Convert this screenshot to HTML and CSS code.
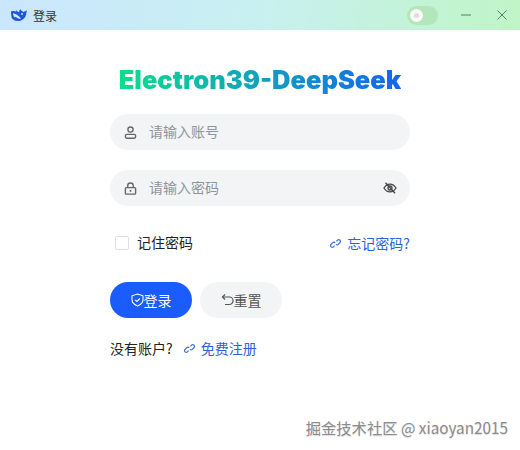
FILE: index.html
```html
<!DOCTYPE html>
<html lang="zh-CN">
  <head>
    <meta charset="UTF-8" />
    <title>登录</title>
    <link rel="stylesheet" href="styles.css">
  </head>
  <body>
    <div class="titlebar">
      <div class="titlebar-left">
        <svg class="logo" width="16" height="13" viewBox="0 0 16 13">
          <path d="M0 2.500C2 1.800 4 2 5.500 2.800 4.800 2 4.500 1.500 5 1c.6 1 1.800 1.800 3 2.300C8.100 2 8.800.8 9.500 0c0 1 .6 1.500 1.500 2 .5.300.8.700 1 1.200.6-.6 1.600-.8 2.400-1 .6-.2 1.100-.5 1.600-1-.1 1.200-.4 2.200-.9 3 .2.300.2.600.1 1-.4 2.200-1.600 4-3.500 5.300-1.500 1-3.300 1.500-5 1.500-2.500 0-4.600-1-6-3C.5 7.800 0 5.200 0 2.500z" fill="#1e56e0"/>
          <path d="M2 4.200c2.400.2 5.600 2 8 5.400-.9.500-2 .3-3-.3C5.500 8.300 4 7.300 3.500 7.800c-.2.500.2 1 .7 1.500-1-.4-2-2.600-2.200-5.100z" fill="#d4ecff"/>
          <circle cx="11" cy="5" r=".9" fill="#d4ecff"/>
        </svg>
        <span class="app-title">登录</span>
      </div>
      <div class="titlebar-right">
        <div class="theme-switch">
          <span class="knob"><span class="knob-dot"></span></span>
        </div>
        <svg class="win-btn" width="10" height="10" viewBox="0 0 10 10"><path d="M0 5h10" stroke="#5d7a68" fill="none"/></svg>
        <svg class="win-btn" width="10" height="10" viewBox="0 0 10 10"><path d="M.5.5l9 9M9.500.5l-9 9" stroke="#5d7a68" fill="none"/></svg>
      </div>
    </div>

    <div class="login-form">
      <h1 class="brand">Electron39-DeepSeek</h1>

      <div class="field">
        <svg class="field-icon" width="13" height="13" viewBox="0 0 14 14" fill="none" stroke="#666" stroke-width="1.500">
          <circle cx="7" cy="3.800" r="2.800"/>
          <rect x="1.500" y="9" width="11" height="4.200" rx="1.500"/>
        </svg>
        <span class="placeholder">请输入账号</span>
      </div>

      <div class="field">
        <svg class="field-icon" width="13" height="13" viewBox="0 0 14 14" fill="none" stroke="#666" stroke-width="1.500">
          <rect x="1.500" y="6" width="11" height="7" rx="1"/>
          <path d="M4 6V4a3 3 0 0 1 6 0v2"/>
          <path d="M7 8.500v2" stroke-width="1.800"/>
        </svg>
        <span class="placeholder">请输入密码</span>
        <svg class="eye-icon" width="14" height="14" viewBox="0 0 14 14" fill="none" stroke="#444" stroke-width="1.300">
          <path d="M1 7c1.500-2.600 3.500-3.900 6-3.900S11.500 4.400 13 7c-1.500 2.600-3.500 3.900-6 3.900S2.500 9.600 1 7z"/>
          <circle cx="7" cy="7" r="2"/>
          <path d="M2.500 1.800l9.500 10.400"/>
        </svg>
      </div>

      <div class="options-row">
        <label class="remember"><span class="checkbox"></span><span class="remember-text">记住密码</span></label>
        <a class="link forgot">
          <svg class="link-icon" width="11" height="11" viewBox="0 0 11 11" fill="none" stroke="#3a6ee0" stroke-width="1.200"><path d="M4.600 7.600l-1.200 1.300a1.700 1.700 0 0 1-2.400-2.400l1.700-1.800a1.700 1.700 0 0 1 2.400 0M6.400 3.400l1.200-1.300a1.700 1.700 0 0 1 2.400 2.400L8.300 6.300a1.700 1.700 0 0 1-2.400 0"/></svg>
          忘记密码?
        </a>
      </div>

      <div class="actions">
        <button class="btn btn-primary">
          <svg width="13" height="14" viewBox="0 0 13 14" fill="none" stroke="#fff" stroke-width="1.100"><path d="M6.500 1L12 2.800v4c0 3-2.500 5-5.500 6.200C3.500 11.800 1 9.800 1 6.800v-4z"/><path d="M4.200 6.800l1.700 1.700 3-3"/></svg>
          登录
        </button>
        <button class="btn btn-plain">
          <svg width="13" height="13" viewBox="0 0 13 13" fill="none" stroke="#555" stroke-width="1.200"><path d="M4 1.500L1.500 4 4 6.500"/><path d="M1.500 4h6.800a3.200 3.200 0 0 1 0 7.500H4"/></svg>
          重置
        </button>
      </div>

      <div class="register-row">
        <span>没有账户?</span>
        <a class="link">
          <svg class="link-icon" width="11" height="11" viewBox="0 0 11 11" fill="none" stroke="#3a6ee0" stroke-width="1.200"><path d="M4.600 7.600l-1.200 1.300a1.700 1.700 0 0 1-2.400-2.400l1.700-1.800a1.700 1.700 0 0 1 2.400 0M6.400 3.400l1.200-1.300a1.700 1.700 0 0 1 2.400 2.400L8.300 6.300a1.700 1.700 0 0 1-2.400 0"/></svg>
          免费注册
        </a>
      </div>
    </div>

    <div class="watermark">掘金技术社区 @ xiaoyan2015</div>
  </body>
</html>
```

FILE: styles.css
```css
* {
  margin: 0;
  padding: 0;
  box-sizing: border-box;
}

body {
  width: 520px;
  height: 450px;
  background: #fff;
  font-family: 'Noto Sans CJK SC', 'Liberation Sans', sans-serif;
  font-size: 14px;
  color: #222;
  position: relative;
  overflow: hidden;
}

.titlebar {
  height: 30px;
  background: linear-gradient(100deg, #cbe6ff 0%, #c8f0f0 50%, #c0f5c6 100%);
  display: flex;
  justify-content: space-between;
  align-items: center;
  padding: 0 13px 0 11px;
}

.titlebar-left {
  display: flex;
  align-items: center;
  gap: 6px;
}

.app-title {
  font-size: 12px;
  color: #333;
}

.titlebar-right {
  display: flex;
  align-items: center;
}

.theme-switch {
  width: 31px;
  height: 19px;
  border-radius: 10px;
  background: #b4e6bc;
  padding: 3px;
  margin-right: 23px;
}

.knob {
  display: flex;
  justify-content: center;
  align-items: center;
  width: 13px;
  height: 13px;
  border-radius: 50%;
  background: #f6fbf4;
}

.knob-dot {
  width: 5px;
  height: 5px;
  border-radius: 50%;
  background: #e8d8dc;
}

.win-btn + .win-btn {
  margin-left: 26px;
}

.login-form {
  width: 300px;
  margin-left: 110px;
}

.brand {
  font-family: 'Inter', 'Liberation Sans', sans-serif;
  font-size: 25.500px;
  font-weight: 900;
  line-height: 28px;
  text-align: center;
  margin: 36px -20px 20px;
  background: linear-gradient(90deg, #10dc8a 0%, #1565ee 100%);
  background-size: 282px 100%;
  background-position: center;
  background-repeat: no-repeat;
  -webkit-background-clip: text;
  background-clip: text;
  color: transparent;
}

.field {
  height: 36px;
  border-radius: 18px;
  background: #f2f4f6;
  display: flex;
  align-items: center;
  padding: 0 13px 0 14px;
  margin-bottom: 20px;
}

.field-icon {
  margin-right: 12px;
}

.placeholder {
  flex: 1;
  line-height: 34px;
  padding-bottom: 2px;
  color: #8f949c;
}

.options-row {
  display: flex;
  justify-content: space-between;
  align-items: flex-end;
  padding-left: 5px;
  margin-top: 26px;
  height: 20px;
}

.remember {
  display: flex;
  align-items: center;
  gap: 8px;
  align-self: flex-start;
}

.remember-text {
  padding-bottom: 2px;
}

.checkbox {
  width: 14px;
  height: 14px;
  border: 1px solid #dcdfe6;
  border-radius: 2px;
  background: #fff;
}

.link {
  color: #2f62d8;
  display: inline-flex;
  align-items: center;
  gap: 6px;
}

.forgot {
  margin-bottom: -1px;
}

.actions {
  display: flex;
  gap: 8px;
  margin-top: 30px;
}

.btn {
  width: 82px;
  height: 36px;
  border: none;
  border-radius: 18px;
  font-family: inherit;
  font-size: 14px;
  line-height: 20px;
  padding-bottom: 1px;
  display: flex;
  justify-content: center;
  align-items: center;
}

.btn-primary {
  background: #1a5cff;
  color: #fff;
}

.btn-plain {
  background: #f2f4f6;
  color: #555;
}

.register-row {
  display: flex;
  align-items: center;
  gap: 11px;
  margin-top: 20px;
}

.watermark {
  position: absolute;
  right: 12px;
  bottom: 12px;
  font-size: 15.300px;
  color: #8c8c8c;
  text-shadow: 0 1px 1px rgba(0, 0, 0, 0.15);
}
```
